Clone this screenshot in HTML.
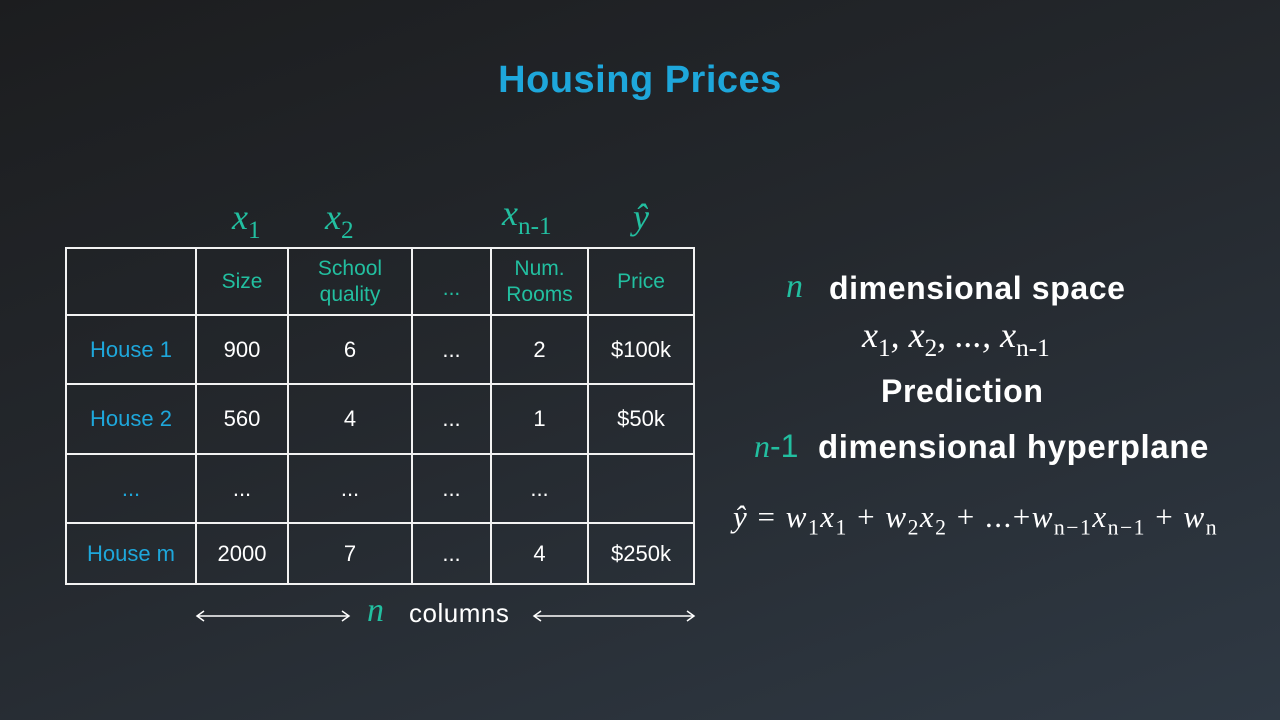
<!DOCTYPE html>
<html><head><meta charset="utf-8"><style>
*{margin:0;padding:0;box-sizing:border-box}
body{width:1280px;height:720px;overflow:hidden;position:relative;background:linear-gradient(160deg,#1c1d1f 0%,#24282d 45%,#2f3944 100%);font-family:"Liberation Sans",sans-serif;color:#fff}
.a{position:absolute;white-space:nowrap}
.m{font-family:"Liberation Serif",serif;font-style:italic}
.t{color:#22bfa0}
.b{color:#1ea7db}
table{position:absolute;left:65px;top:247px;border-collapse:collapse}
td{border:2px solid #f2f2f2;text-align:center;font-size:22px;color:#fff;padding:0}
.h td{color:#22bfa0;font-size:21px;line-height:26px}
sub{font-style:normal;font-size:0.7em;vertical-align:-0.35em}
.w{font-weight:bold;letter-spacing:0.6px}
</style></head><body>
<div class="a b" style="left:0;width:1280px;text-align:center;top:59px;font-size:38px;font-weight:bold;letter-spacing:0.5px">Housing Prices</div>
<div class="a m t" style="left:232px;top:196px;font-size:36px">x<sub>1</sub></div>
<div class="a m t" style="left:325px;top:196px;font-size:36px">x<sub>2</sub></div>
<div class="a m t" style="left:502px;top:192px;font-size:36px">x<sub>n-1</sub></div>
<div class="a m t" style="left:633px;top:196px;font-size:36px">ŷ</div>
<table>
<tr class="h" style="height:67px"><td style="width:130px"></td><td style="width:92px">Size</td><td style="width:124px">School<br>quality</td><td style="width:79px;padding-top:14px">...</td><td style="width:97px">Num.<br>Rooms</td><td style="width:106px">Price</td></tr>
<tr style="height:69px"><td style="color:#1ea7db">House 1</td><td>900</td><td>6</td><td>...</td><td>2</td><td>$100k</td></tr>
<tr style="height:70px"><td style="color:#1ea7db">House 2</td><td>560</td><td>4</td><td>...</td><td>1</td><td>$50k</td></tr>
<tr style="height:69px"><td style="color:#1ea7db">...</td><td>...</td><td>...</td><td>...</td><td>...</td><td></td></tr>
<tr style="height:61px"><td style="color:#1ea7db">House m</td><td>2000</td><td>7</td><td>...</td><td>4</td><td>$250k</td></tr>
</table>
<svg class="a" style="left:195px;top:608px" width="505" height="16">
<g stroke="#fff" stroke-width="1.5" fill="none"><line x1="3" y1="8" x2="153" y2="8"/><path d="M9 3L2 8L9 13M147 3L154 8L147 13"/><line x1="340" y1="8" x2="498" y2="8"/><path d="M346 3L339 8L346 13M492 3L499 8L492 13"/></g></svg>
<div class="a m t" style="left:367px;top:592px;font-size:34px">n</div>
<div class="a" style="left:409px;top:598px;font-size:26px;letter-spacing:0.5px">columns</div>
<div class="a m t" style="left:786px;top:268px;font-size:34px">n</div>
<div class="a w" style="left:829px;top:270px;font-size:32px">dimensional space</div>
<div class="a m" style="left:862px;top:314px;font-size:36px">x<sub>1</sub>, x<sub>2</sub>, ..., x<sub>n-1</sub></div>
<div class="a w" style="left:881px;top:373px;font-size:32px">Prediction</div>
<div class="a t" style="left:754px;top:428px;font-size:32px"><span class="m">n</span>-1</div>
<div class="a w" style="left:818px;top:428px;font-size:33px">dimensional hyperplane</div>
<div class="a m" style="left:733px;top:499px;font-size:31px;letter-spacing:1.5px">ŷ <span style="font-style:normal">=</span> w<sub>1</sub>x<sub>1</sub> <span style="font-style:normal">+</span> w<sub>2</sub>x<sub>2</sub> <span style="font-style:normal">+ ...+</span>w<sub>n−1</sub>x<sub>n−1</sub> <span style="font-style:normal">+</span> w<sub>n</sub></div>
</body></html>
